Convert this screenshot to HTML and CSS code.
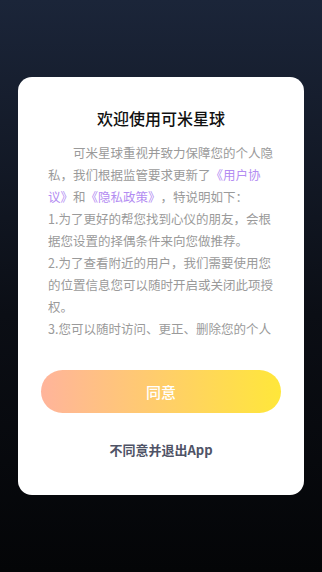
FILE: index.html
```html
<!doctype html>
<html>
<head>
  <meta charset="utf-8">
  <link rel="stylesheet" href="styles.css">
</head>
<body>
  <div class="mask">
    <div class="dialog">
      <h3 class="dialog-title">欢迎使用可米星球</h3>
      <div class="dialog-content">
        <p class="first">可米星球重视并致力保障您的个人隐私，我们根据监管要求更新了<span class="link">《用户协议》</span>和<span class="link">《隐私政策》</span>，特说明如下：</p>
        <p>1.为了更好的帮您找到心仪的朋友，会根据您设置的择偶条件来向您做推荐。</p>
        <p>2.为了查看附近的用户，我们需要使用您的位置信息您可以随时开启或关闭此项授权。</p>
        <p>3.您可以随时访问、更正、删除您的个人信息，我们也提供账号注销的渠道。</p>
        <p>4.未经您的同意，我们不会向第三方共享您的个人信息。</p>
      </div>
      <button class="agree-btn">同意</button>
      <div class="refuse">不同意并退出App</div>
    </div>
  </div>
</body>
</html>
```

FILE: styles.css
```css
html, body {
  margin: 0;
  height: 100%;
}
body {
  background: linear-gradient(to bottom, #1b2539 0%, #0b0e15 55%, #040507 100%);
  font-family: "Noto Sans CJK SC", "Noto Sans", sans-serif;
}
.mask {
  padding: 77px 18px 0;
}
.dialog {
  background: #fff;
  border-radius: 14px;
  padding: 30px 0 35px;
  text-align: center;
}
.dialog-title {
  margin: 0;
  font-size: 16px;
  line-height: 22px;
  font-weight: 500;
  color: #111;
}
.dialog-content {
  margin: 13px 29px 0 30px;
  height: 198px;
  overflow: hidden;
  text-align: left;
  font-size: 12.5px;
  line-height: 22px;
  color: #9a9a9a;
  text-spacing-trim: space-all;
}
.dialog-content p {
  margin: 0;
}
.dialog-content .first {
  text-indent: 2em;
}
.link {
  color: #b38cf2;
}
.agree-btn {
  display: block;
  width: 240px;
  height: 43px;
  margin: 30px auto 0;
  border: none;
  border-radius: 22px;
  background: linear-gradient(to right, #ffb49b, #ffe73a);
  color: #fff;
  font-family: inherit;
  font-size: 15px;
  font-weight: 500;
}
.refuse {
  margin-top: 27px;
  font-size: 13px;
  line-height: 20px;
  font-weight: bold;
  color: #4f5366;
}
```
